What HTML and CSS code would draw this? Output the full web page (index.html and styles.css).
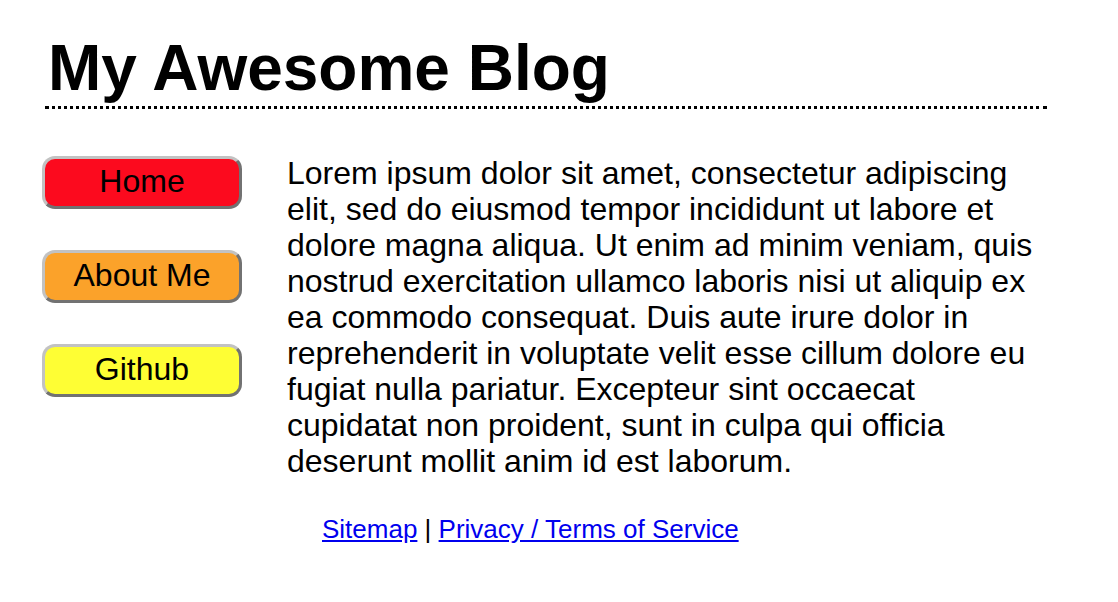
FILE: index.html
```html
<!DOCTYPE html>
<html>
<head>
<meta charset="utf-8">
<title>My Awesome Blog</title>
<link rel="stylesheet" href="styles.css">
</head>
<body>
<div class="page">
  <header class="header">
    <h1 class="title">My Awesome Blog</h1>
  </header>
  <div class="main">
    <nav class="nav">
      <a class="btn btn-home">Home</a>
      <a class="btn btn-about">About Me</a>
      <a class="btn btn-github">Github</a>
    </nav>
    <p class="content">Lorem ipsum dolor sit amet, consectetur adipiscing elit, sed do eiusmod tempor incididunt ut labore et dolore magna aliqua. Ut enim ad minim veniam, quis nostrud exercitation ullamco laboris nisi ut aliquip ex ea commodo consequat. Duis aute irure dolor in reprehenderit in voluptate velit esse cillum dolore eu fugiat nulla pariatur. Excepteur sint occaecat cupidatat non proident, sunt in culpa qui officia deserunt mollit anim id est laborum.</p>
  </div>
  <footer class="footer">
    <a class="link" href="#">Sitemap</a> | <a class="link" href="#">Privacy / Terms of Service</a>
  </footer>
</div>
</body>
</html>
```
FILE: styles.css
```css
html, body {
  margin: 0;
  padding: 0;
  background: #ffffff;
}
body {
  font-family: "Liberation Sans", Arial, Helvetica, sans-serif;
  color: #000000;
}
.page {
  padding: 31px 71px 0 42px;
}
.header {
  margin-left: 3px;
  border-bottom: 3px dotted #000000;
}
.title {
  margin: 0;
  padding-left: 3px;
  font-size: 64px;
  line-height: 75px;
  font-weight: bold;
}
.main {
  display: flex;
  align-items: flex-start;
  gap: 45px;
  margin-top: 47px;
}
.nav {
  display: flex;
  flex-direction: column;
  gap: 41px;
  flex: 0 0 200px;
}
.btn {
  display: block;
  box-sizing: border-box;
  width: 200px;
  height: 53px;
  border: 3px solid #c2c2c2;
  border-right-color: #727272;
  border-bottom-color: #727272;
  border-radius: 13px;
  text-align: center;
  font-size: 32px;
  line-height: 45px;
  color: #000000;
}
.btn-home { background: #fc0a1e; }
.btn-about { background: #fba22a; }
.btn-github { background: #fefe34; }
.content {
  margin: -1px 0 0 0;
  width: 752px;
  font-size: 32px;
  line-height: 36px;
}
.footer {
  margin-top: 35px;
  padding-left: 280px;
  font-size: 26px;
  line-height: 30px;
}
.link {
  color: #0000ee;
  text-decoration: underline;
}
```
